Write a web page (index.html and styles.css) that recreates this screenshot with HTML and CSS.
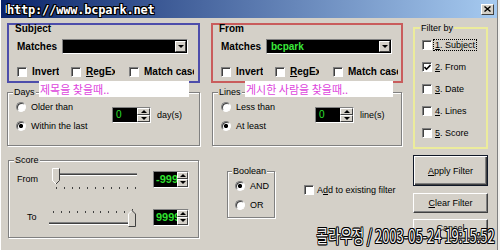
FILE: index.html
```html
<!DOCTYPE html>
<html lang="en">
<head>
  <meta charset="UTF-8" />
  <title>Filter</title>
  <link rel="stylesheet" href="styles.css">
</head>
<body>
  <div class="window">
    <div class="titlebar">
      <span class="title">Filter</span>
      <span class="close">
        <svg width="7" height="6" viewBox="0 0 7 6"><path d="M0.5 0.5L6.5 5.5M6.5 0.5L0.5 5.5" stroke="#000" stroke-width="1.4"/></svg>
      </span>
    </div>

    <div class="dialog">
      <div class="col col-left">
        <div class="mark mark-blue">
          <div class="group-name">Subject</div>
          <div class="match-row">
            <span class="match-label">Matches</span>
            <div class="combo">
              <span class="combo-text"></span>
              <span class="combo-btn"><span class="arrow-down"></span></span>
            </div>
          </div>
          <div class="opt-row">
            <div class="opt opt-invert"><span class="check"></span><span class="opt-text">Invert</span></div>
            <div class="opt opt-regex"><span class="check"></span><span class="opt-text"><u>R</u>egEx</span></div>
            <div class="opt opt-case"><span class="check"></span><span class="opt-text">Match case</span></div>
          </div>
        </div>

        <fieldset class="group group-range">
          <legend>Days</legend>
          <div class="range-row">
            <div class="radio-list">
              <div class="radio-item"><span class="radio"></span>Older than</div>
              <div class="radio-item"><span class="radio on"></span>Within the last</div>
            </div>
            <div class="spin-wrap">
              <div class="spin">
                <span class="spin-value">0</span>
                <span class="spin-btns"><span class="spin-btn"><span class="arrow-up"></span></span><span class="spin-btn"><span class="arrow-down"></span></span></span>
              </div>
              <span class="unit">day(s)</span>
            </div>
          </div>
        </fieldset>

        <fieldset class="group group-score">
          <legend>Score</legend>
          <div class="score-body">
            <div class="score-row">
              <span class="score-label">From</span>
              <svg class="slider" width="90" height="24" viewBox="0 0 90 24">
                <rect x="4" y="6" width="84" height="1" fill="#808080"/>
                <rect x="4" y="7" width="84" height="1" fill="#404040"/>
                <rect x="4" y="8" width="84" height="1" fill="#fff"/>
                <polygon points="3.5,1.5 10.5,1.5 10.5,13.5 7,17 3.5,13.5" fill="#d4d0c8"/>
                <path d="M3.5 14V1.5H10.5" stroke="#fff" fill="none"/>
                <path d="M10.5 1.5V13.5L7 17" stroke="#404040" fill="none"/>
                <path d="M3.5 13.5L7 17" stroke="#fff" fill="none"/>
                <g fill="#404040">
                  <rect x="7" y="20" width="1" height="2"/><rect x="15" y="20" width="1" height="2"/>
                  <rect x="23" y="20" width="1" height="2"/><rect x="30" y="20" width="1" height="2"/>
                  <rect x="38" y="20" width="1" height="2"/><rect x="46" y="20" width="1" height="2"/>
                  <rect x="54" y="20" width="1" height="2"/><rect x="62" y="20" width="1" height="2"/>
                  <rect x="70" y="20" width="1" height="2"/><rect x="78" y="20" width="1" height="2"/>
                  <rect x="86" y="20" width="1" height="2"/>
                </g>
              </svg>
              <div class="spin spin-score">
                <span class="spin-value">-999</span>
                <span class="spin-btns"><span class="spin-btn"><span class="arrow-up"></span></span><span class="spin-btn"><span class="arrow-down"></span></span></span>
              </div>
            </div>
            <div class="score-row">
              <span class="score-label score-label-to">To</span>
              <svg class="slider" width="90" height="22" viewBox="0 0 90 22">
                <g fill="#404040">
                  <rect x="4" y="5" width="1" height="2"/><rect x="12" y="5" width="1" height="2"/>
                  <rect x="20" y="5" width="1" height="2"/><rect x="28" y="5" width="1" height="2"/>
                  <rect x="36" y="5" width="1" height="2"/><rect x="44" y="5" width="1" height="2"/>
                  <rect x="51" y="5" width="1" height="2"/><rect x="59" y="5" width="1" height="2"/>
                  <rect x="67" y="5" width="1" height="2"/><rect x="75" y="5" width="1" height="2"/>
                  <rect x="83" y="3" width="1" height="4"/>
                </g>
                <rect x="0" y="16" width="86" height="1" fill="#808080"/>
                <rect x="0" y="17" width="86" height="1" fill="#404040"/>
                <rect x="0" y="18" width="86" height="1" fill="#fff"/>
                <polygon points="79.5,8 83,4.5 86.5,8 86.5,20.5 79.5,20.5" fill="#d4d0c8"/>
                <path d="M79.5 20.5V8L83 4.5" stroke="#fff" fill="none"/>
                <path d="M83 4.5L86.5 8V20.5H79.5" stroke="#404040" fill="none"/>
              </svg>
              <div class="spin spin-score">
                <span class="spin-value">9999</span>
                <span class="spin-btns"><span class="spin-btn"><span class="arrow-up"></span></span><span class="spin-btn"><span class="arrow-down"></span></span></span>
              </div>
            </div>
          </div>
        </fieldset>
      </div>

      <div class="col col-mid">
        <div class="mark mark-red">
          <div class="group-name">From</div>
          <div class="match-row">
            <span class="match-label">Matches</span>
            <div class="combo">
              <span class="combo-text">bcpark</span>
              <span class="combo-btn"><span class="arrow-down"></span></span>
            </div>
          </div>
          <div class="opt-row">
            <div class="opt opt-invert"><span class="check"></span><span class="opt-text">Invert</span></div>
            <div class="opt opt-regex"><span class="check"></span><span class="opt-text"><u>R</u>egEx</span></div>
            <div class="opt opt-case"><span class="check"></span><span class="opt-text">Match case</span></div>
          </div>
        </div>

        <fieldset class="group group-range group-lines">
          <legend>Lines</legend>
          <div class="range-row">
            <div class="radio-list">
              <div class="radio-item"><span class="radio"></span>Less than</div>
              <div class="radio-item"><span class="radio on"></span>At least</div>
            </div>
            <div class="spin-wrap">
              <div class="spin">
                <span class="spin-value">0</span>
                <span class="spin-btns"><span class="spin-btn"><span class="arrow-up"></span></span><span class="spin-btn"><span class="arrow-down"></span></span></span>
              </div>
              <span class="unit">line(s)</span>
            </div>
          </div>
        </fieldset>

        <div class="bottom-row">
          <fieldset class="group group-bool">
            <legend>Boolean</legend>
            <div class="bool-body">
              <div class="radio-item"><span class="radio on"></span>AND</div>
              <div class="radio-item"><span class="radio"></span>OR</div>
            </div>
          </fieldset>
          <div class="add-filter"><span class="check"></span><span>A<u>d</u>d to existing filter</span></div>
        </div>
      </div>

      <div class="col col-right">
        <fieldset class="group group-filter">
          <legend>Filter by</legend>
          <div class="filter-body">
            <div class="filter-item"><span class="check"></span><span class="focus"><u>1</u>. Subject</span></div>
            <div class="filter-item"><span class="check"><svg width="7" height="7" viewBox="0 0 7 7"><path d="M0.5 3L2.5 5.2L6.5 1" stroke="#000" stroke-width="1.6" fill="none"/></svg></span><span><u>2</u>. From</span></div>
            <div class="filter-item"><span class="check"></span><span><u>3</u>. Date</span></div>
            <div class="filter-item"><span class="check"></span><span><u>4</u>. Lines</span></div>
            <div class="filter-item"><span class="check"></span><span><u>5</u>. Score</span></div>
          </div>
        </fieldset>
        <div class="btn btn-apply"><span><u>A</u>pply Filter</span></div>
        <div class="btn btn-clear"><span><u>C</u>lear Filter</span></div>
        <div class="btn btn-cancel"><span>Cancel</span></div>
      </div>
    </div>

    <div class="stamp-url">http://www.bcpark.net</div>
    <div class="note note-days">제목을 찾을때..</div>
    <div class="note note-lines">게시한 사람을 찾을때..</div>
    <div class="stamp-date">콜라우정 / 2003-05-24 19:15:52</div>
  </div>
</body>
</html>
```

FILE: styles.css
```css
* {
  box-sizing: border-box;
}

body {
  margin: 0;
  background: #d4d0c8;
  font-family: "Liberation Sans", Arial, sans-serif;
  font-size: 9px;
  color: #000;
}

.window {
  position: relative;
  width: 500px;
  height: 250px;
  padding: 0 3px 0 1px;
  background: #d4d0c8;
  box-shadow: inset 1px 0 #fff, inset -2px 0 #f2f1ee, inset -3px 0 #808080;
  overflow: hidden;
}

.titlebar {
  height: 18px;
  display: flex;
  align-items: center;
  justify-content: space-between;
  padding: 0 3px 0 4px;
  background: linear-gradient(90deg, #0a246a, #a6caf0);
}

.title {
  color: #fff;
  font-weight: bold;
  font-size: 11px;
}

.close {
  width: 13px;
  height: 11px;
  display: flex;
  align-items: center;
  justify-content: center;
  background: #d4d0c8;
  border: 1px solid;
  border-color: #fff #404040 #404040 #fff;
}

.dialog {
  display: flex;
  padding: 5px 0 0 6px;
}

.col {
  display: flex;
  flex-direction: column;
}

.col-left { width: 193px; }
.col-mid { width: 192px; margin-left: 11px; }
.col-right { width: 75px; margin-left: 10px; }

/* coloured marks drawn around the two match groups */
.mark {
  height: 60px;
  border: 2px solid;
}

.mark-blue { border-color: #4d4dab; }
.mark-red { border-color: #c95c5c; }

.group-name {
  margin: -2px 0 0 6px;
  font-weight: bold;
  font-size: 10px;
  line-height: 12px;
}

.match-row {
  display: flex;
  align-items: center;
  margin-top: 4px;
  padding-left: 8px;
}

.match-label {
  width: 45px;
  font-weight: bold;
  font-size: 10px;
}

.combo {
  width: 126px;
  height: 15px;
  display: flex;
  align-items: center;
  justify-content: space-between;
  padding: 0 1px 0 4px;
  background: #000;
  border: 1px solid;
  border-color: #808080 #fff #fff #808080;
}

.combo-text {
  color: #3bea3b;
  font-weight: bold;
  font-size: 10px;
}

.combo-btn {
  width: 11px;
  height: 11px;
  display: flex;
  align-items: center;
  justify-content: center;
  background: #d4d0c8;
  border: 1px solid;
  border-color: #fff #404040 #404040 #fff;
}

.arrow-down {
  border-left: 3px solid transparent;
  border-right: 3px solid transparent;
  border-top: 3px solid #000;
}

.arrow-up {
  border-left: 3px solid transparent;
  border-right: 3px solid transparent;
  border-bottom: 3px solid #000;
}

.opt-row {
  display: flex;
  align-items: center;
  height: 11px;
  margin-top: 12px;
  padding-left: 8px;
}

.opt {
  display: flex;
  align-items: center;
  gap: 5px;
  font-weight: bold;
  font-size: 10px;
}

.opt-invert { width: 54px; }
.opt-regex { width: 58px; }

.opt-text {
  white-space: nowrap;
  overflow: hidden;
}

.opt-regex .opt-text { width: 29px; }
.opt-case .opt-text { width: 50px; }

.check {
  flex: none;
  width: 10px;
  height: 10px;
  display: flex;
  align-items: center;
  justify-content: center;
  background: #fff;
  border: 1px solid;
  border-color: #808080 #fff #fff #808080;
  box-shadow: inset 1px 1px #404040;
}

.radio {
  flex: none;
  width: 10px;
  height: 10px;
  border-radius: 50%;
  background: #fff;
  border: 1px solid;
  border-color: #808080 #fff #fff #808080;
  box-shadow: inset 1px 1px #404040;
}

.radio.on {
  background: radial-gradient(circle, #000 1.8px, #fff 2.4px);
}

/* etched group boxes */
.group {
  margin: 0;
  padding: 0;
  min-width: 0;
  border: 1px solid #808080;
  box-shadow: inset 1px 1px #fff, 1px 1px #fff;
}

.group legend {
  margin-left: 5px;
  padding: 0 1px;
  line-height: 12px;
  background: #d4d0c8;
}

.group-range {
  height: 60px;
  margin-top: 3px;
}

.group-lines {
  margin: 3px 1px 0;
}

.group-lines .radio-list {
  width: 94px;
}

.range-row {
  display: flex;
  align-items: flex-start;
  padding: 3px 0 0 8px;
}

.radio-list {
  width: 96px;
  display: flex;
  flex-direction: column;
  gap: 7px;
}

.radio-item {
  display: flex;
  align-items: center;
  gap: 5px;
  height: 12px;
}

.spin-wrap {
  display: flex;
  align-items: center;
  gap: 6px;
  margin-top: 6px;
}

.spin {
  width: 39px;
  height: 16px;
  display: flex;
  background: #000;
  border: 1px solid;
  border-color: #808080 #fff #fff #808080;
}

.spin-value {
  flex: 1;
  overflow: hidden;
  padding-left: 3px;
  color: #2fe02f;
  font-size: 10px;
  line-height: 14px;
  white-space: nowrap;
}

.spin-btns {
  width: 13px;
  display: flex;
  flex-direction: column;
}

.spin-btn {
  flex: 1;
  display: flex;
  align-items: center;
  justify-content: center;
  background: #d4d0c8;
  border: 1px solid;
  border-color: #fff #404040 #404040 #fff;
}

.spin-score {
  width: 36px;
  height: 17px;
}

.spin-score .spin-value {
  padding-left: 2px;
  font-weight: bold;
  font-size: 11px;
  line-height: 15px;
}

.spin-score .spin-btns { width: 11px; }

.group-score {
  height: 84px;
  margin: 8px 0 0 1px;
  width: 191px;
}

.score-body {
  padding: 1px 0 0 8px;
}

.score-row {
  display: flex;
  align-items: center;
}

.score-row + .score-row {
  margin-top: 15px;
}

.score-label {
  width: 32px;
}

.score-label-to {
  padding-left: 10px;
}

.slider {
  display: block;
  margin-right: 14px;
}

.bottom-row {
  display: flex;
  align-items: flex-start;
  margin-top: 19px;
  padding-left: 16px;
}

.group-bool {
  width: 48px;
}

.group-bool legend {
  margin-left: 4px;
}

.bool-body {
  display: flex;
  flex-direction: column;
  gap: 7px;
  padding: 3px 0 6px 7px;
}

.add-filter {
  display: flex;
  align-items: center;
  gap: 3px;
  margin: 20px 0 0 29px;
  white-space: nowrap;
}

.group-filter {
  height: 127px;
  margin-top: -1px;
  border: 2px solid #ecec9c;
  box-shadow: none;
}

.filter-body {
  display: flex;
  flex-direction: column;
  gap: 10px;
  padding: 5px 0 0 7px;
}

.filter-item {
  display: flex;
  align-items: center;
  gap: 2px;
  height: 12px;
  white-space: nowrap;
}

.filter-item span:last-child {
  padding: 0 1px;
}

.focus {
  outline: 1px dotted #000;
}

.btn {
  display: flex;
  align-items: center;
  justify-content: center;
  background: #d4d0c8;
  border: 1px solid;
  border-color: #fff #404040 #404040 #fff;
  box-shadow: inset -1px -1px #808080;
}

.btn-apply {
  height: 31px;
  margin-top: 6px;
  border: 1px solid #101828;
  box-shadow: inset 1px 1px #fff, inset -1px -1px #404040, inset -2px -2px #808080;
}

.btn-clear {
  height: 20px;
  margin-top: 7px;
}

.btn-cancel {
  height: 20px;
  margin-top: 6px;
  padding-bottom: 3px;
}

/* text stamped over the screenshot */
.stamp-url {
  position: absolute;
  left: 7px;
  top: 3px;
  color: #fff;
  font-family: "DejaVu Sans Mono", monospace;
  font-weight: bold;
  font-size: 12px;
  letter-spacing: -0.2px;
  text-shadow: 1px 0 #000, -1px 0 #000, 0 1px #000, 0 -1px #000, 1px 1px #000, -1px -1px #000, 1px -1px #000, -1px 1px #000;
}

.note {
  position: absolute;
  top: 81px;
  height: 16px;
  padding-left: 1px;
  background: #fff;
  color: #dd44dd;
  font-family: "Noto Sans CJK KR", sans-serif;
  font-size: 11px;
  line-height: 16px;
}

.note-days { left: 39px; width: 150px; }
.note-lines { left: 245px; width: 148px; }

.stamp-date {
  position: absolute;
  right: 5px;
  top: 223px;
  color: #f4f4f4;
  font-family: "Noto Sans CJK KR", sans-serif;
  font-size: 18px;
  line-height: 24px;
  white-space: nowrap;
  transform: scaleX(0.72);
  transform-origin: right center;
  text-shadow: 1px 0 #000, -1px 0 #000, 0 1px #000, 0 -1px #000, 1px 1px #000, -1px -1px #000, 1px -1px #000, -1px 1px #000;
}
```
